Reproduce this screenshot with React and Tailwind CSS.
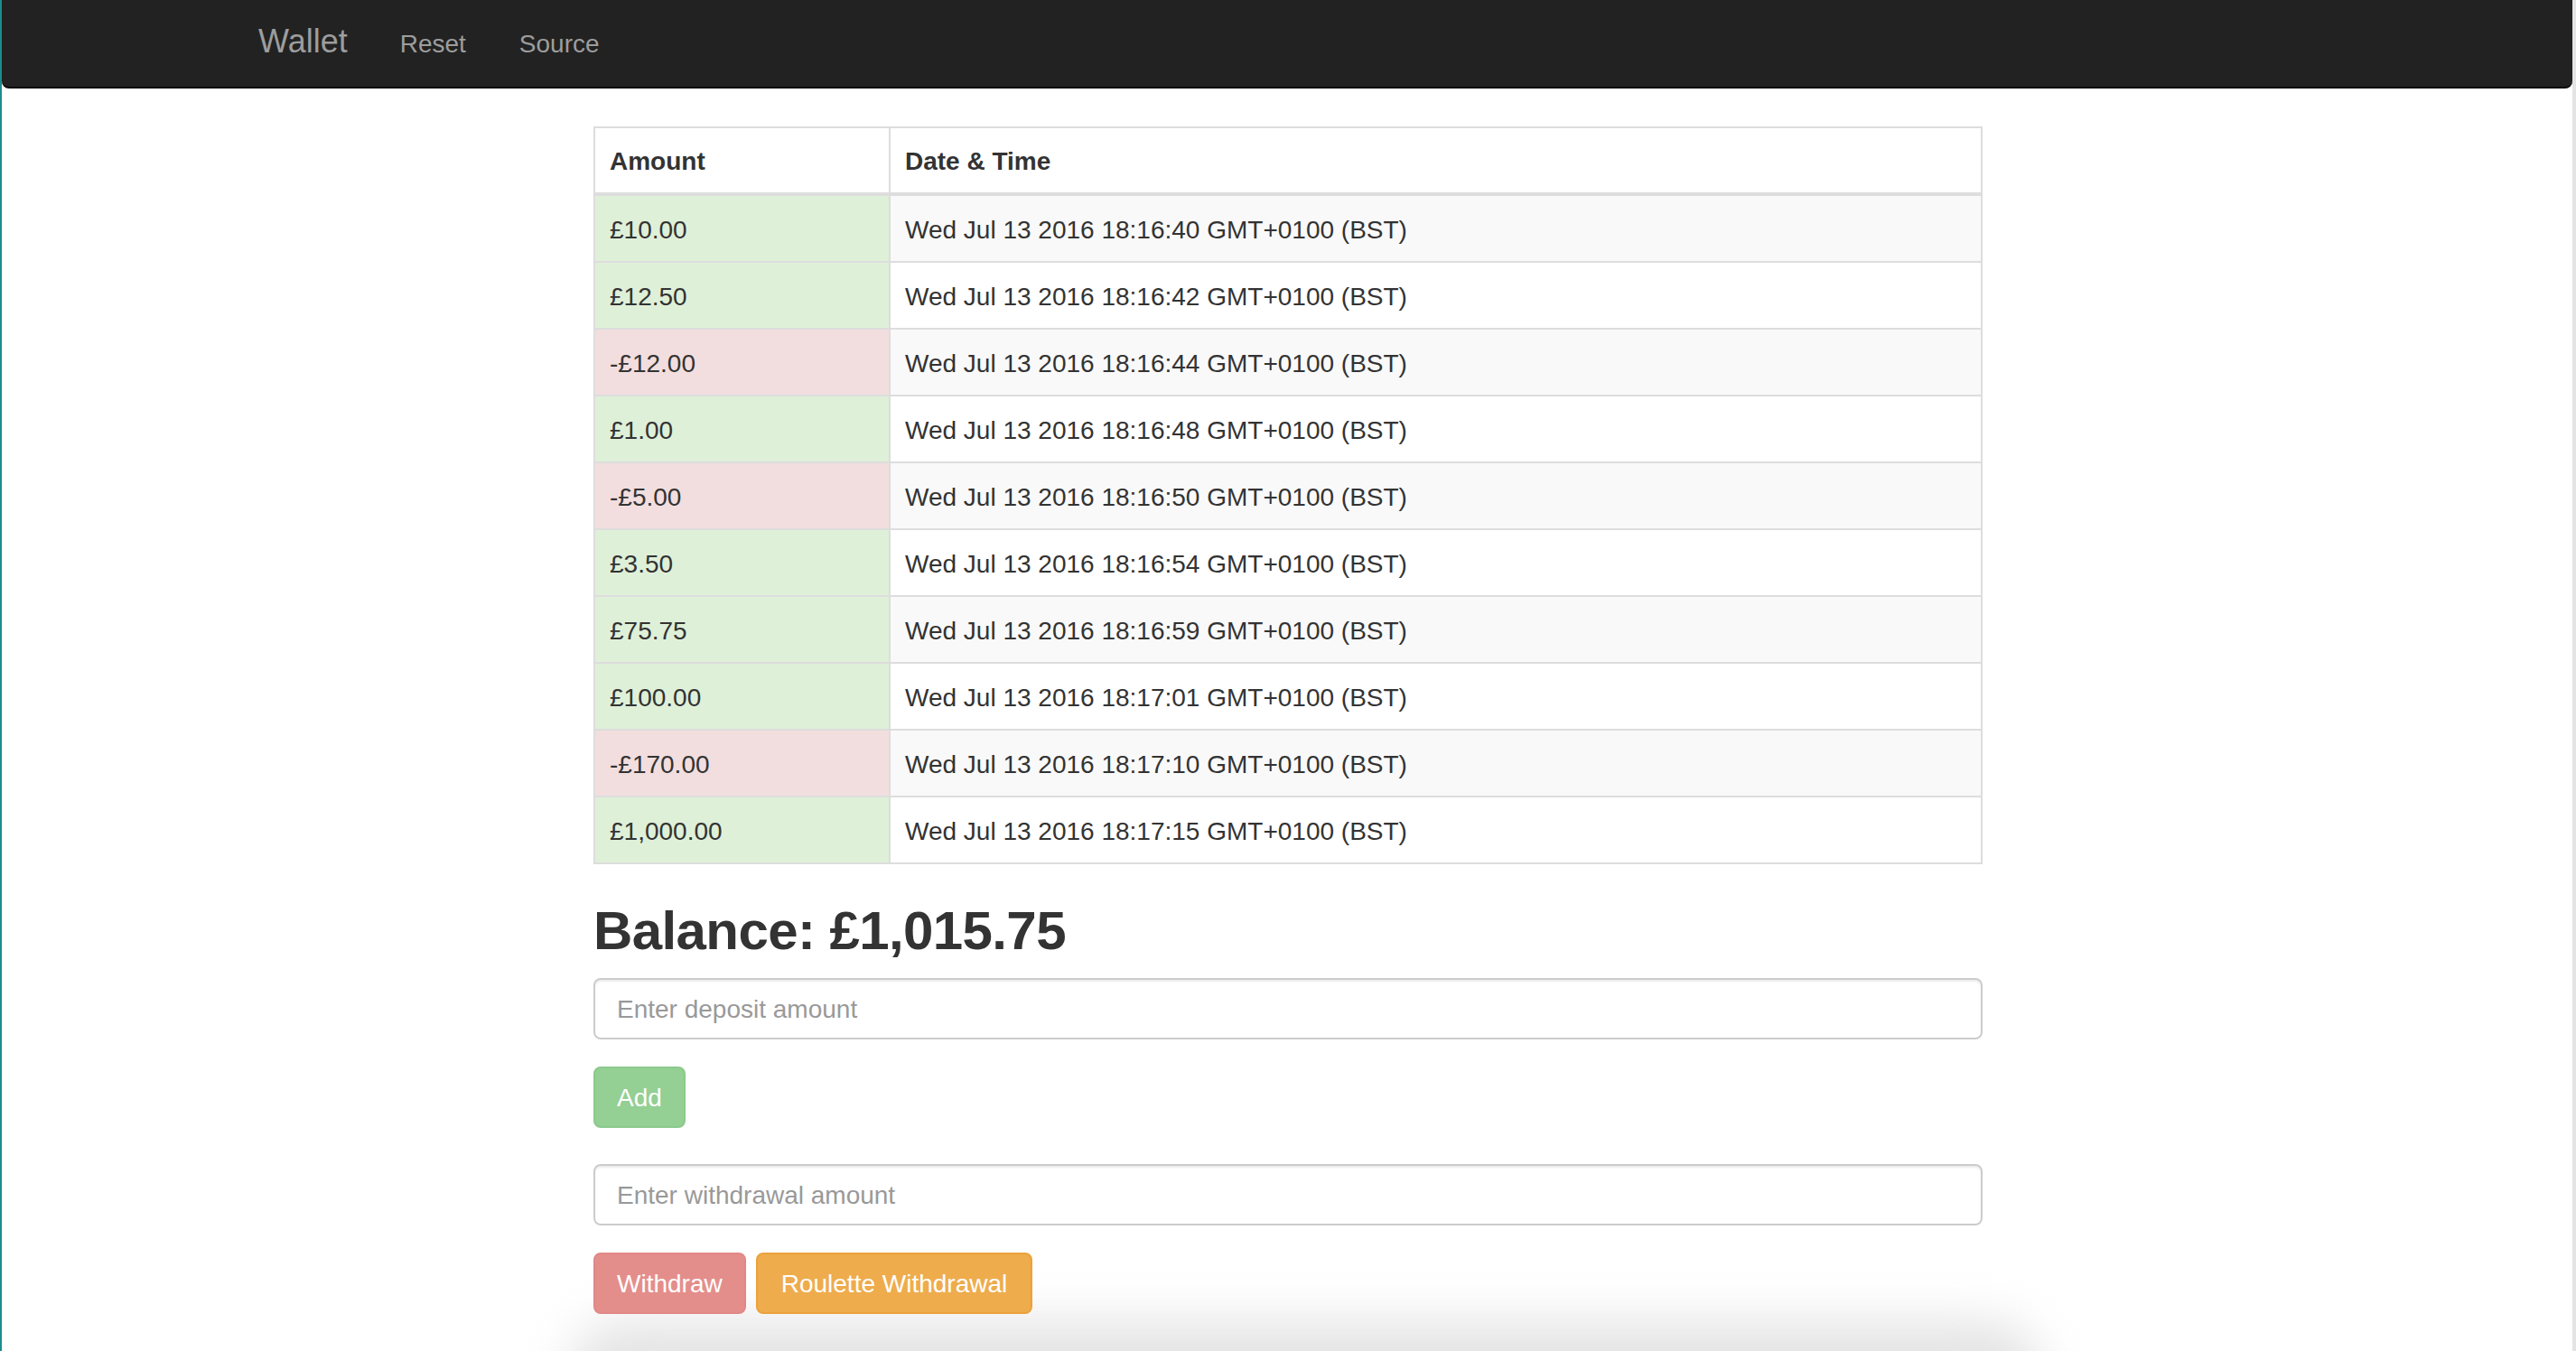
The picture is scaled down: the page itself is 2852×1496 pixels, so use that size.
import React from 'react';

const rows = [
  { amount: '£10.00', date: 'Wed Jul 13 2016 18:16:40 GMT+0100 (BST)', credit: true },
  { amount: '£12.50', date: 'Wed Jul 13 2016 18:16:42 GMT+0100 (BST)', credit: true },
  { amount: '-£12.00', date: 'Wed Jul 13 2016 18:16:44 GMT+0100 (BST)', credit: false },
  { amount: '£1.00', date: 'Wed Jul 13 2016 18:16:48 GMT+0100 (BST)', credit: true },
  { amount: '-£5.00', date: 'Wed Jul 13 2016 18:16:50 GMT+0100 (BST)', credit: false },
  { amount: '£3.50', date: 'Wed Jul 13 2016 18:16:54 GMT+0100 (BST)', credit: true },
  { amount: '£75.75', date: 'Wed Jul 13 2016 18:16:59 GMT+0100 (BST)', credit: true },
  { amount: '£100.00', date: 'Wed Jul 13 2016 18:17:01 GMT+0100 (BST)', credit: true },
  { amount: '-£170.00', date: 'Wed Jul 13 2016 18:17:10 GMT+0100 (BST)', credit: false },
  { amount: '£1,000.00', date: 'Wed Jul 13 2016 18:17:15 GMT+0100 (BST)', credit: true },
];

const App = () => {
  return (
    <div className="relative w-[2852px] h-[1496px] overflow-hidden bg-white text-[#333] font-['Liberation_Sans',Arial,sans-serif]">
      {/* window edges */}
      <div className="absolute left-0 top-0 bottom-0 w-[2px] bg-[#1c8c8e]" />
      <div className="absolute right-0 top-0 bottom-0 w-[4px] bg-[#e4e4e4]" />
      {/* shadow of the window below */}
      <div className="absolute left-[630px] top-[1462px] w-[1630px] h-[140px] rounded-[60px] bg-[#e4e4e4] blur-[26px]" />

      {/* NAVBAR */}
      <nav className="relative ml-[2px] mr-[4px] h-[98px] bg-[#222] border-b-2 border-[#080808] rounded-b-[8px] flex items-baseline pt-[26px] pl-[284px] text-[#9d9d9d]">
        <span className="text-[36px] leading-[40px]">Wallet</span>
        <span className="ml-[58px] text-[28px] leading-[40px]">Reset</span>
        <span className="ml-[59px] text-[28px] leading-[40px]">Source</span>
      </nav>

      {/* CONTENU */}
      <div className="relative w-[1538px] mx-auto mt-[42px]">
        <table className="w-full border-collapse border-2 border-[#ddd] text-[28px] leading-[40px]">
          <thead>
            <tr>
              <th className="w-[327px] text-left font-bold px-[16px] pt-[17px] pb-[14px] border-2 border-b-4 border-[#ddd]">Amount</th>
              <th className="text-left font-bold px-[16px] pt-[17px] pb-[14px] border-2 border-b-4 border-[#ddd]">Date &amp; Time</th>
            </tr>
          </thead>
          <tbody>
            {rows.map((r, i) => (
              <tr key={i} className={i % 2 === 0 ? 'bg-[#f9f9f9]' : 'bg-white'}>
                <td className={`px-[16px] pt-[18px] pb-[14px] border-2 border-[#ddd] ${r.credit ? 'bg-[#dff0d8]' : 'bg-[#f2dede]'}`}>{r.amount}</td>
                <td className="px-[16px] pt-[18px] pb-[14px] border-2 border-[#ddd]">{r.date}</td>
              </tr>
            ))}
          </tbody>
        </table>

        <h2 className="mt-[41px] mb-[19px] text-[60px] leading-[66px] font-bold tracking-[-0.6px]">Balance: £1,015.75</h2>

        <input
          type="text"
          placeholder="Enter deposit amount"
          className="block w-full h-[68px] px-[24px] pt-[2px] text-[28px] border-2 border-[#ccc] rounded-[8px] shadow-[inset_0_2px_2px_rgba(0,0,0,0.075)] placeholder:text-[#999] outline-none"
        />
        <button className="mt-[30px] h-[68px] px-[24px] pt-[2px] text-[28px] text-white bg-[#94cf94] border-2 border-[#8cc98c] rounded-[8px]">
          Add
        </button>

        <input
          type="text"
          placeholder="Enter withdrawal amount"
          className="block mt-[40px] w-full h-[68px] px-[24px] pt-[2px] text-[28px] border-2 border-[#ccc] rounded-[8px] shadow-[inset_0_2px_2px_rgba(0,0,0,0.075)] placeholder:text-[#999] outline-none"
        />
        <div className="mt-[30px] flex gap-[11px]">
          <button className="h-[68px] px-[24px] pt-[2px] text-[28px] text-white bg-[#e48e8c] border-2 border-[#e18886] rounded-[8px]">
            Withdraw
          </button>
          <button className="h-[68px] px-[26px] pt-[2px] text-[28px] text-white bg-[#eeac4c] border-2 border-[#eca23c] rounded-[8px]">
            Roulette Withdrawal
          </button>
        </div>
      </div>
    </div>
  );
};

export default App;
